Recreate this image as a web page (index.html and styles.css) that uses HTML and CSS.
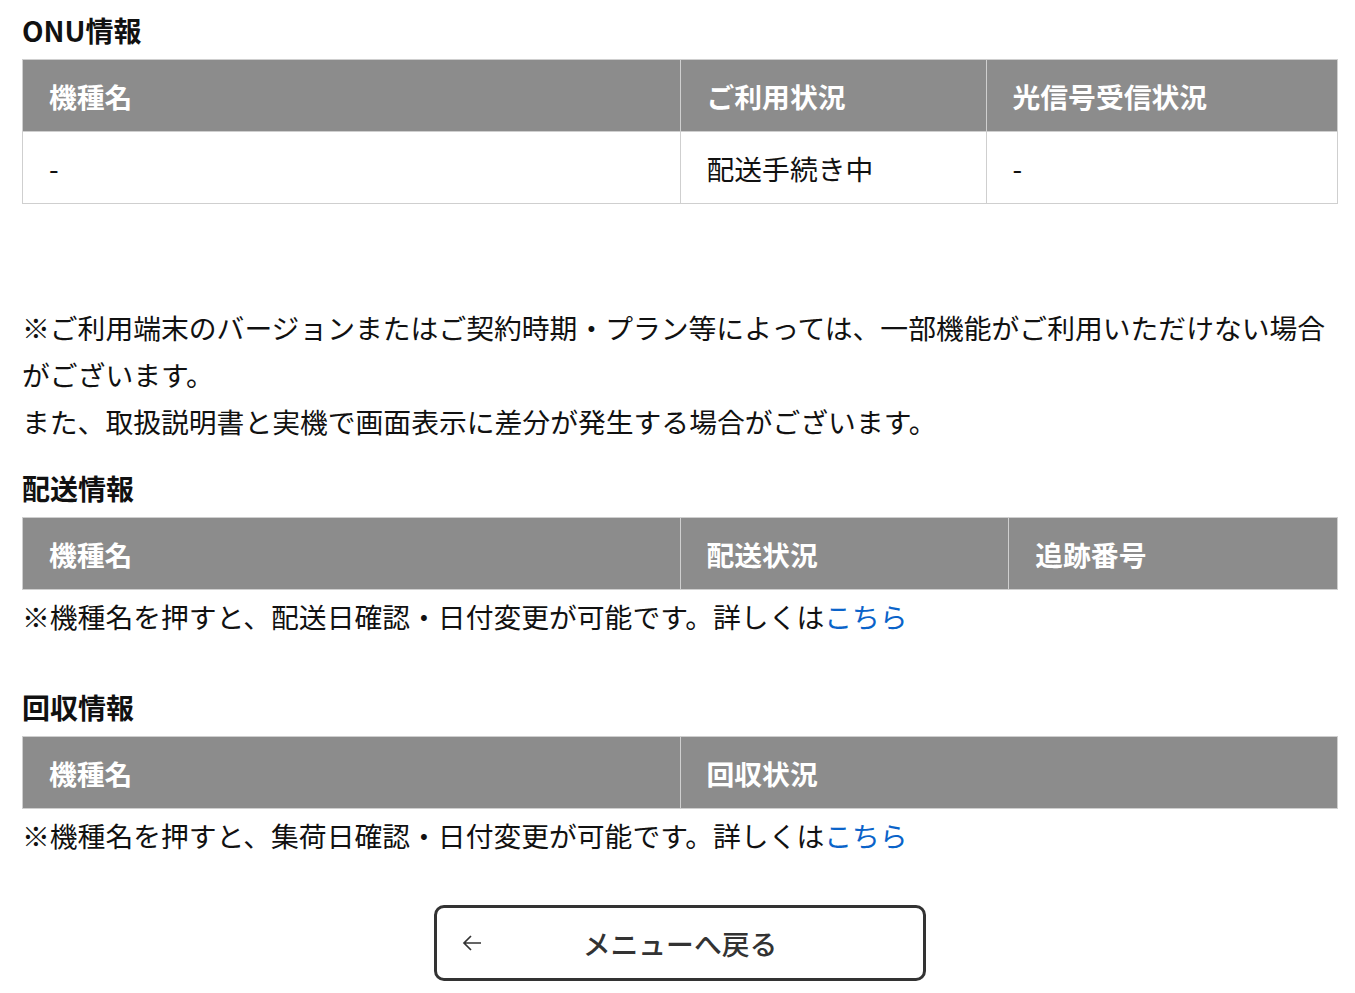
FILE: index.html
```html
<!DOCTYPE html>
<html lang="ja">
<head>
    <meta charset="UTF-8">
    <title>ONU情報</title>
    <link rel="stylesheet" href="styles.css">
</head>
<body>
    <div class="page">
        <h2 class="section-title">ONU情報</h2>
        <table class="info-table">
            <colgroup>
                <col class="col-half">
                <col class="col-status">
                <col>
            </colgroup>
            <tr>
                <th>機種名</th>
                <th>ご利用状況</th>
                <th>光信号受信状況</th>
            </tr>
            <tr>
                <td>-</td>
                <td>配送手続き中</td>
                <td>-</td>
            </tr>
        </table>

        <p class="notice">※ご利用端末のバージョンまたはご契約時期・プラン等によっては、一部機能がご利用いただけない場合がございます。<br>また、取扱説明書と実機で画面表示に差分が発生する場合がございます。</p>

        <h2 class="section-title">配送情報</h2>
        <table class="info-table">
            <colgroup>
                <col class="col-half">
                <col class="col-quarter">
                <col class="col-quarter">
            </colgroup>
            <tr>
                <th>機種名</th>
                <th>配送状況</th>
                <th>追跡番号</th>
            </tr>
        </table>
        <p class="table-note">※機種名を押すと、配送日確認・日付変更が可能です。詳しくは<a href="#">こちら</a></p>

        <h2 class="section-title collect">回収情報</h2>
        <table class="info-table">
            <colgroup>
                <col class="col-half">
                <col class="col-half">
            </colgroup>
            <tr>
                <th>機種名</th>
                <th>回収状況</th>
            </tr>
        </table>
        <p class="table-note">※機種名を押すと、集荷日確認・日付変更が可能です。詳しくは<a href="#">こちら</a></p>

        <div class="back-wrap">
            <a href="#" class="back-button">
                <svg class="back-arrow" width="22" height="22" viewBox="0 0 22 22">
                    <path d="M20 11H3M10 4l-7 7 7 7" fill="none" stroke="#333" stroke-width="1.7"/>
                </svg>
                <span>メニューへ戻る</span>
            </a>
        </div>
    </div>
</body>
</html>
```

FILE: styles.css
```css
body {
    margin: 0;
    background-color: #fff;
    color: #111;
    font-family: "Noto Sans CJK JP", "Noto Sans", sans-serif;
    font-size: 27.8px;
}

.page {
    width: 1316px;
    margin-left: 22px;
    padding-top: 1px;
}

.section-title {
    font-size: 28px;
    font-weight: 700;
    line-height: 40px;
    margin: 9px 0 9px;
}

.section-title.collect {
    margin-top: 47px;
}

.info-table {
    width: 100%;
    border-collapse: collapse;
    table-layout: fixed;
}

.col-half {
    width: 50%;
}

.col-status {
    width: 306px;
}

.col-quarter {
    width: 25%;
}

.info-table th,
.info-table td {
    height: 72px;
    padding: 0 26px;
    text-align: left;
    box-sizing: border-box;
    border: 1px solid #cfcfcf;
    line-height: 40px;
}

.info-table th {
    background-color: #8c8c8c;
    color: #fff;
    font-weight: 700;
}

.info-table td {
    color: #111;
    font-weight: 400;
}

.notice {
    margin: 100px 0 0;
    line-height: 47px;
}

.notice + .section-title {
    margin-top: 23px;
}

.table-note {
    margin: 3px 0 0;
    line-height: 47px;
}

.table-note a {
    color: #0a63c9;
    text-decoration: none;
}

.back-wrap {
    display: flex;
    justify-content: center;
    margin-top: 46px;
}

.back-button {
    position: relative;
    display: flex;
    align-items: center;
    justify-content: center;
    width: 492px;
    height: 76px;
    box-sizing: border-box;
    border: 3px solid #333;
    border-radius: 10px;
    color: #333;
    text-decoration: none;
    font-weight: 500;
}

.back-arrow {
    position: absolute;
    left: 24px;
    top: 24px;
}
```
